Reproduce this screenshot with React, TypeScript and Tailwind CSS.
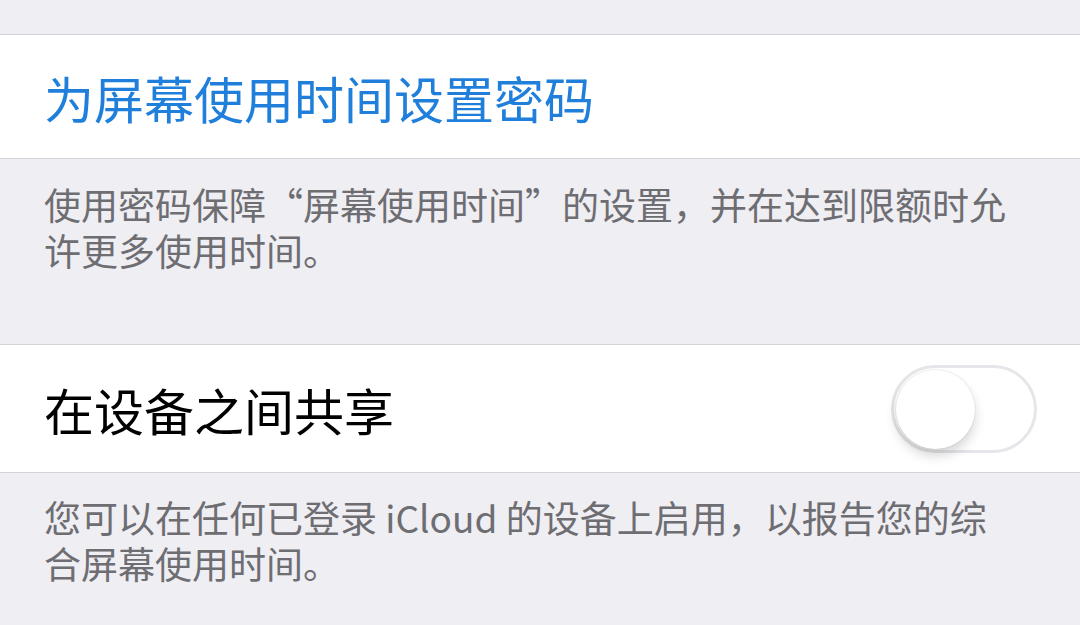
import { useState } from 'react';

const cjk = "font-['PingFang_SC','Noto_Sans_CJK_SC',sans-serif]";

function Toggle({ on, onChange }: { on: boolean; onChange: (v: boolean) => void }) {
  return (
    <button
      type="button"
      onClick={() => onChange(!on)}
      className={`relative h-[88px] w-[146px] shrink-0 rounded-full border-[3px] transition-colors ${
        on ? 'border-[#4cd964] bg-[#4cd964]' : 'border-[#e6e6ea] bg-white'
      }`}
    >
      <span
        className={`absolute top-[2px] h-[79px] w-[79px] rounded-full bg-white shadow-[0_7px_12px_rgba(0,0,0,0.16),0_0_0_1px_rgba(0,0,0,0.05)] transition-all ${
          on ? 'left-[58px]' : 'left-[2px]'
        }`}
      />
    </button>
  );
}

export default function App() {
  const [shared, setShared] = useState(false);

  return (
    <div className={`min-h-screen bg-[#efeef3] ${cjk}`}>
      <div className="h-[34px]" />

      {/* Passcode row */}
      <div className="flex h-[125px] items-center border-y border-[#d3d2d7] bg-white px-[44px]">
        <span className="text-[50px] leading-none text-[#1f7fdb]">为屏幕使用时间设置密码</span>
      </div>
      <p className="pt-[22px] pr-[62px] pb-[71px] pl-[44px] text-[37px] leading-[46px] text-[#6d6d72]">
        使用密码保障“屏幕使用时间”的设置，并在达到限额时允许更多使用时间。
      </p>

      {/* Share across devices */}
      <div className="flex h-[129px] items-center justify-between border-y border-[#d3d2d7] bg-white pr-[43px] pl-[44px]">
        <span className="text-[50px] leading-none text-black">在设备之间共享</span>
        <Toggle on={shared} onChange={setShared} />
      </div>
      <p className="pt-[21px] pr-[62px] pl-[44px] text-[37px] leading-[46px] text-[#6d6d72]">
        您可以在任何已登录 iCloud 的设备上启用，以报告您的综合屏幕使用时间。
      </p>
    </div>
  );
}
